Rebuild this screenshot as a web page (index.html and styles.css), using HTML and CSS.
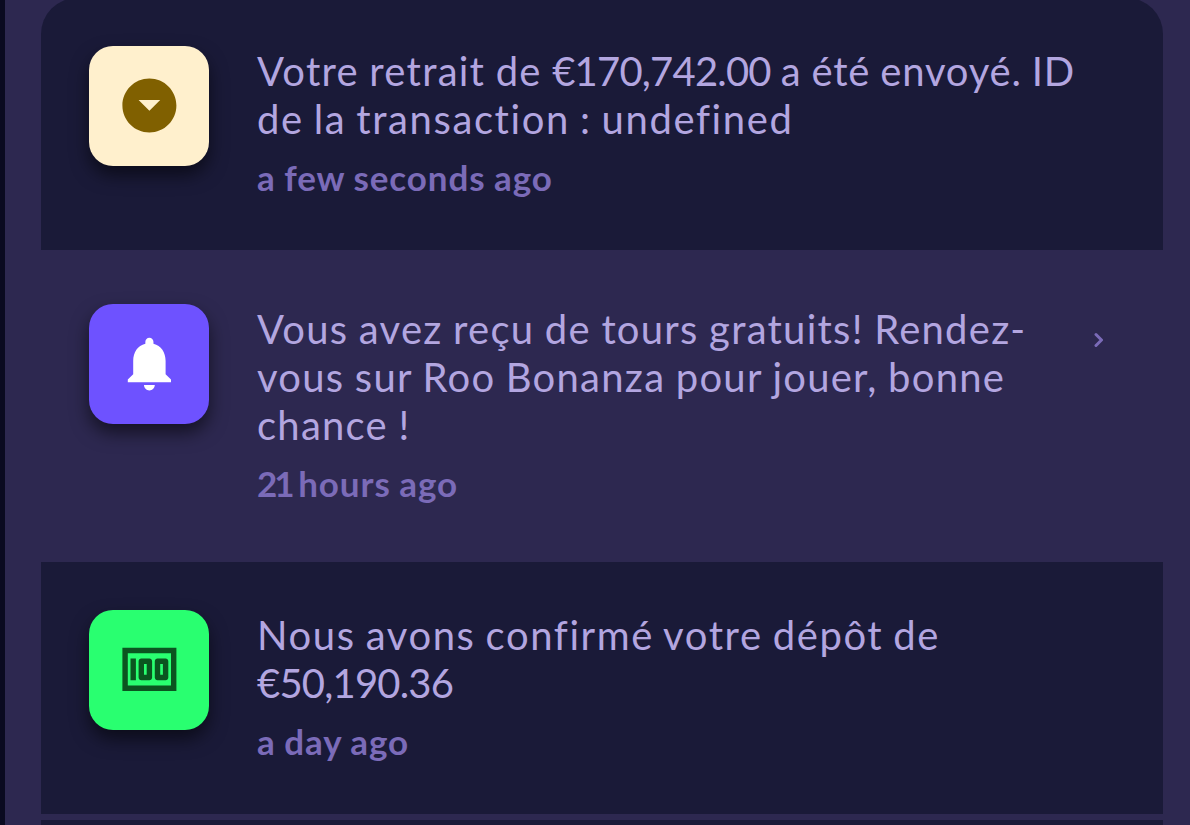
FILE: index.html
```
<!DOCTYPE html>
<html lang="fr">
<head>
    <meta charset="utf-8">
    <title>Notifications</title>
    <link rel="stylesheet" href="styles.css">
</head>
<body>
    <div class="notifications">
        <div class="item first">
            <div class="icon withdraw">
                <svg viewBox="0 0 24 24"><path d="M12 2C6.48 2 2 6.48 2 12s4.48 10 10 10 10-4.48 10-10S17.52 2 12 2zm0 12l-4-4h8l-4 4z"/></svg>
            </div>
            <div class="content">
                <p class="message">Votre retrait de <span class="amount">€170,742.00</span><span class="tight"> a été envoyé. ID</span><br><span class="wide">de la transaction : undefined</span></p>
                <p class="time">a few seconds ago</p>
            </div>
        </div>

        <div class="item unread">
            <div class="icon bell">
                <svg viewBox="0 0 24 24"><path d="M12 22c1.1 0 2-.9 2-2h-4c0 1.1.89 2 2 2zm6-6v-5c0-3.07-1.64-5.64-4.5-6.32V4c0-.83-.67-1.5-1.5-1.5s-1.5.67-1.5 1.5v.68C7.63 5.36 6 7.92 6 11v5l-2 2v1h16v-1l-2-2z"/></svg>
            </div>
            <div class="content">
                <p class="message">Vous avez reçu de tours gratuits! Rendez-<br>vous sur Roo Bonanza pour jouer, bonne<br>chance !</p>
                <p class="time"><span class="number">21</span> hours ago</p>
            </div>
            <svg class="arrow" viewBox="0 0 10 16"><path d="M2 2.5L7.5 8L2 13.5"/></svg>
        </div>

        <div class="item">
            <div class="icon deposit">
                <svg viewBox="0 0 24 24"><path d="M5 8h2v8H5zm7 0H9c-.55 0-1 .45-1 1v6c0 .55.45 1 1 1h3c.55 0 1-.45 1-1V9c0-.55-.45-1-1-1zm-1 6h-1v-4h1v4zm7-6h-3c-.55 0-1 .45-1 1v6c0 .55.45 1 1 1h3c.55 0 1-.45 1-1V9c0-.55-.45-1-1-1zm-1 6h-1v-4h1v4zM2 4v16h20V4H2zm18 14H4V6h16v12z"/></svg>
            </div>
            <div class="content">
                <p class="message"><span class="wide">Nous avons confirmé votre dépôt de</span><br><span class="amount">€50,190.36</span></p>
                <p class="time">a day ago</p>
            </div>
        </div>

        <div class="item last"></div>
    </div>
</body>
</html>
```
FILE: styles.css
```
* {
    box-sizing: border-box;
}

body {
    margin: 0;
    height: 825px;
    overflow: hidden;
    background-color: #2d2850;
    border-left: 5px solid #0a0a20;
    font-family: Lato, "Open Sans", sans-serif;
}

.notifications {
    display: flex;
    flex-direction: column;
    gap: 6px;
    margin: -2px 27px 0 36px;
}

.item {
    display: flex;
    align-items: flex-start;
    flex-shrink: 0;
    min-height: 252px;
    padding: 48px;
    background-color: #1a1a38;
}

.first {
    border-radius: 36px 36px 0 0;
}

.last {
    min-height: 0;
    height: 5px;
    padding: 0;
}

.unread {
    height: 300px;
    background-color: #2d2850;
}

.icon {
    display: flex;
    justify-content: center;
    width: 120px;
    height: 120px;
    padding-top: 27px;
    border-radius: 24px;
    box-shadow: 0 9px 18px rgba(0, 0, 0, 0.55);
}

.icon svg {
    width: 64.8px;
    height: 64.8px;
    fill: currentColor;
}

.withdraw {
    background-color: #fff0cd;
    color: #806000;
}

.bell {
    background-color: #6e52ff;
    color: #fff;
}

.deposit {
    background-color: #29ff70;
    color: #0b5520;
}

.content {
    flex: 1;
    margin-left: 48px;
    padding-top: 1px;
    white-space: nowrap;
}

.message {
    margin: 0;
    font-size: 40px;
    line-height: 48px;
    letter-spacing: 1.25px;
    word-spacing: -1px;
    color: #b3a6e0;
}

.wide {
    letter-spacing: 1.6px;
    word-spacing: -1.8px;
}

.tight {
    letter-spacing: 0.8px;
}

.amount {
    letter-spacing: -0.8px;
}

.time {
    margin: 10px 0 0;
    font-size: 35px;
    font-weight: 700;
    line-height: 48px;
    letter-spacing: 0.9px;
    word-spacing: -0.8px;
    color: #7b6bb8;
}

.number {
    margin-right: -2px;
    letter-spacing: -3px;
}

.arrow {
    width: 10px;
    height: 16px;
    margin: 28px 11px 0 0;
    fill: none;
    stroke: #7b6bb8;
    stroke-width: 3;
    stroke-linecap: round;
    stroke-linejoin: round;
}
```
